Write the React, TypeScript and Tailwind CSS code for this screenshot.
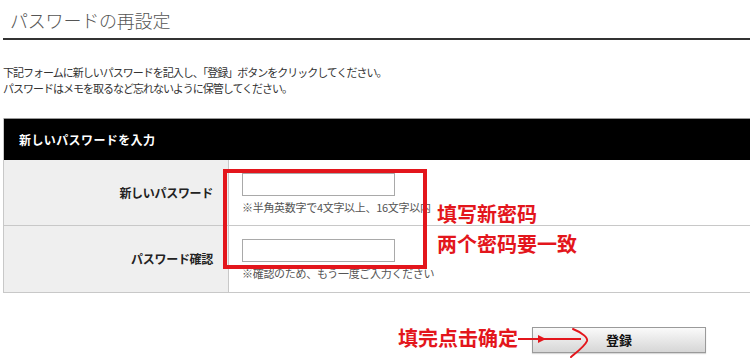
import React from 'react';

const jp = "font-['Noto_Sans_CJK_JP','Noto_Sans_CJK_SC',sans-serif]";
const sc = "font-['Noto_Sans_CJK_SC','Noto_Sans_CJK_JP',sans-serif]";

const FormRow: React.FC<{ label: string; hint: string; last?: boolean }> = ({ label, hint, last }) => (
  <div className={`flex h-[66px] ${last ? '' : 'border-b border-[#c8c8c8]'}`}>
    <div className="w-[225px] shrink-0 bg-[#efefef] border-r border-[#c8c8c8] flex items-center justify-end pr-[15px] text-[12px] font-bold text-[#222] tracking-[-0.3px]">
      {label}
    </div>
    <div className="flex-1 pl-[13px] pt-[13px]">
      <div className="w-[153px] h-[23px] border border-[#a9a9a9] bg-white" />
      <div className="mt-[4px] text-[11px] leading-[14px] text-[#555] tracking-[-0.3px] whitespace-nowrap">{hint}</div>
    </div>
  </div>
);

export default function App() {
  return (
    <div className={`relative w-[750px] h-[362px] overflow-hidden bg-white ${jp}`}>
      <h1 className="pl-[10px] pt-[9px] h-[38px] text-[18px] leading-[22px] font-light text-[#555] tracking-[-0.2px]">
        パスワードの再設定
      </h1>
      <div className="ml-[3px] h-[2px] bg-[#333]" />

      <div className="pl-[3px] pt-[24px] text-[11px] leading-[16px] text-[#333] tracking-[-1px]">
        <p>下記フォームに新しいパスワードを記入し、「登録」ボタンをクリックしてください。</p>
        <p>パスワードはメモを取るなど忘れないように保管してください。</p>
      </div>

      <div className="ml-[3px] mt-[22px] border-l border-[#c8c8c8] border-b">
        <div className="h-[42px] bg-black flex items-center pl-[15px] text-white text-[12px] font-bold tracking-[0.4px] border-t border-[#999]">
          新しいパスワードを入力
        </div>
        <FormRow label="新しいパスワード" hint="※半角英数字で4文字以上、16文字以内" />
        <FormRow label="パスワード確認" hint="※確認のため、もう一度ご入力ください" last />
      </div>

      <div className="flex justify-end pr-[44px] pt-[34px]">
        <button className="w-[174px] h-[26px] border border-[#9a9a9a] bg-gradient-to-b from-[#fafafa] to-[#d6d6d6] text-[13px] font-bold text-[#111] shadow-[0_1px_1px_rgba(0,0,0,0.15)]">
          登録
        </button>
      </div>

      {/* red annotations on top */}
      <div className="absolute left-[223px] top-[169px] w-[204px] h-[100px] border-[4px] border-[#e3161c]" />
      <div className={`absolute left-[437px] top-[199px] text-[20px] leading-[30px] font-bold text-[#e3161c] ${sc}`}>
        <div>填写新密码</div>
        <div>两个密码要一致</div>
      </div>
      <div className={`absolute left-[398px] top-[325px] text-[20px] leading-[26px] font-bold text-[#e3161c] ${sc}`}>
        填完点击确定
      </div>
      <svg className="absolute left-[515px] top-[324px]" width="80" height="36" viewBox="0 0 80 36">
        <line x1="3" y1="15" x2="66" y2="15" stroke="#e3161c" strokeWidth="2" />
        <polygon points="23,11 31,15 23,19" fill="#e3161c" />
        <path d="M58 5 C68 9 73 14 72 17 C70 22 62 28 56 33" stroke="#e3161c" strokeWidth="2" fill="none" strokeLinecap="round" />
      </svg>
    </div>
  );
}
